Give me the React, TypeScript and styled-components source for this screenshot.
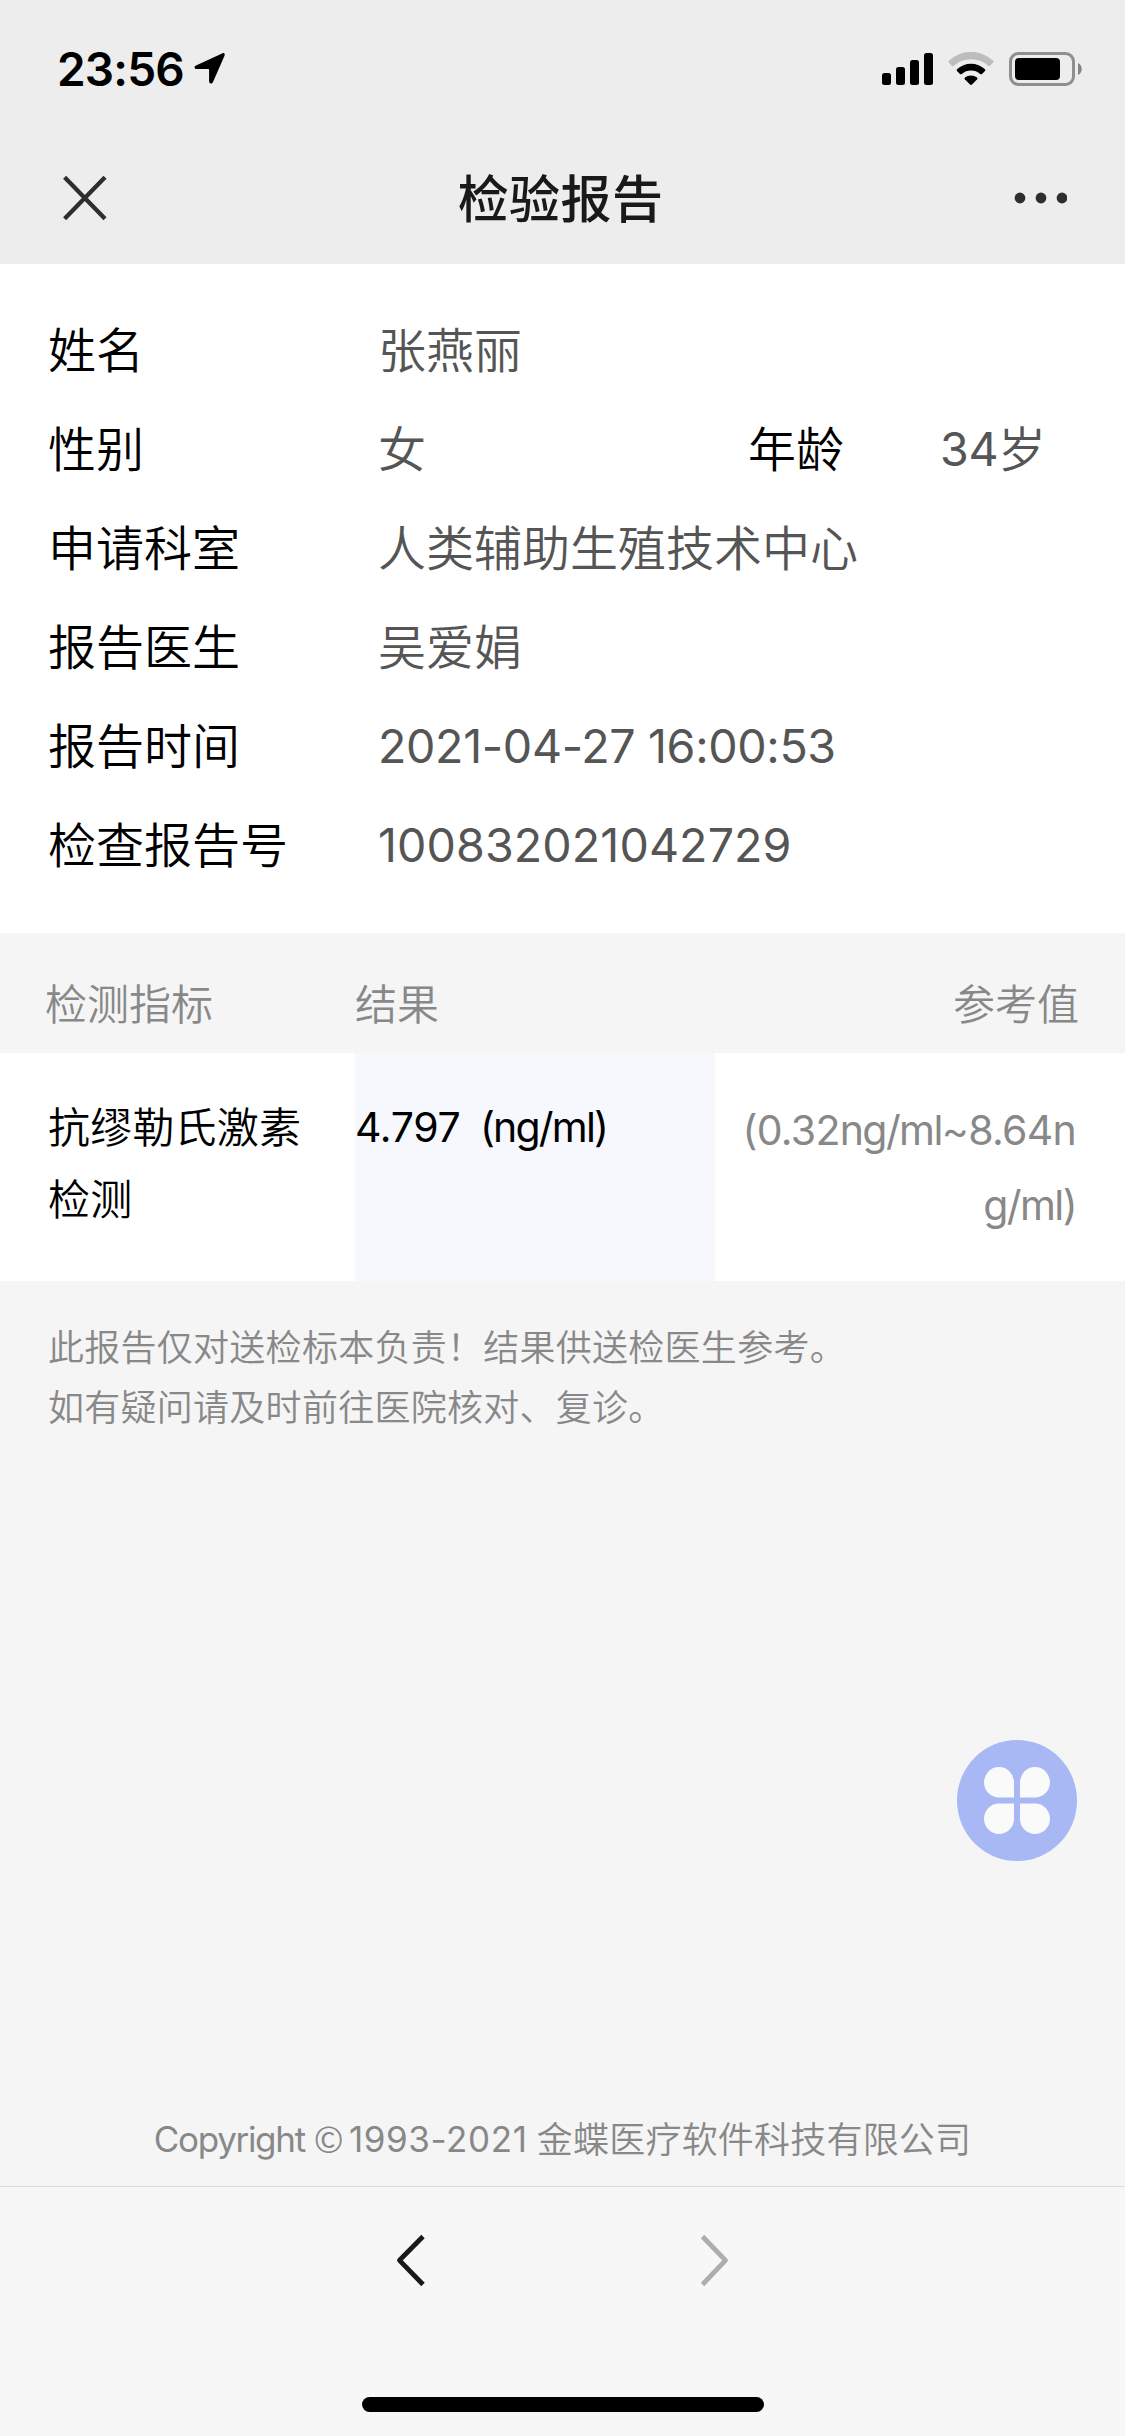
import React from "react";
import styled, { createGlobalStyle } from "styled-components";

const GlobalStyle = createGlobalStyle`
  * { box-sizing: border-box; }
  html, body { margin: 0; padding: 0; }
  body {
    background: #f5f5f5;
    font-family: Inter, "Noto Sans CJK SC", sans-serif;
    font-weight: 350;
    color: #000;
  }
`;

const Page = styled.div`
  position: relative;
  display: flex;
  flex-direction: column;
  width: 1125px;
  height: 2436px;
  overflow: hidden;
  background: #f5f5f5;
`;

const Header = styled.header`
  height: 264px;
  background: #ededed;
`;

const StatusBar = styled.div`
  display: flex;
  align-items: center;
  justify-content: space-between;
  height: 132px;
  padding: 6px 43px 0 57px;
`;

const StatusGroup = styled.div<{ $gap: number }>`
  display: flex;
  align-items: center;
  gap: ${(p) => p.$gap}px;
`;

const Clock = styled.span`
  font-size: 46px;
  font-weight: 600;
  line-height: 60px;
  letter-spacing: -0.8px;
`;

const NavBar = styled.div`
  display: grid;
  grid-template-columns: 200px 1fr 200px;
  align-items: center;
  height: 132px;
  padding: 0 58px 0 60px;
`;

const Title = styled.h1`
  margin: 0;
  padding: 3px 6px 0 0;
  text-align: center;
  font-size: 51px;
  font-weight: 500;
  line-height: 72px;
  letter-spacing: 0.4px;
  color: #191919;
`;

const NavRight = styled.div`
  display: flex;
  justify-content: flex-end;
`;

const InfoPanel = styled.section`
  height: 669px;
  padding: 37px 48px 0;
  background: #fff;
`;

const InfoRow = styled.div`
  display: flex;
  height: 99px;
  font-size: 48px;
  line-height: 99px;
  white-space: nowrap;
`;

const Label = styled.span<{ $width: number }>`
  width: ${(p) => p.$width}px;
`;

const Value = styled.span<{ $width?: number }>`
  width: ${(p) => (p.$width ? `${p.$width}px` : "auto")};
  color: #555;
`;

const Num = styled.span<{ $size: number; $track?: number; $lift?: number }>`
  font-size: ${(p) => p.$size}px;
  font-weight: 400;
  line-height: 1;
  letter-spacing: ${(p) => p.$track ?? 0}px;
  vertical-align: ${(p) => p.$lift ?? 0}px;
`;

const TableHead = styled.div`
  display: grid;
  grid-template-columns: 355px 360px 1fr;
  height: 120px;
  padding-top: 22px;
  font-size: 42px;
  line-height: 100px;
  color: #888;
`;

const HeadCell = styled.span<{ $align?: string; $pad?: string }>`
  padding: ${(p) => p.$pad ?? "0"};
  text-align: ${(p) => p.$align ?? "left"};
`;

const TableRow = styled.div`
  display: grid;
  grid-template-columns: 355px 360px 1fr;
  height: 228px;
  background: #fff;
`;

const NameCell = styled.div`
  padding: 39px 0 0 48px;
  font-size: 42px;
  line-height: 72px;
  letter-spacing: 0.2px;
  white-space: nowrap;
`;

const ResultCell = styled.div`
  padding-top: 38px;
  background: #f7f8fe;
  font-size: 41px;
  line-height: 72px;
  white-space: pre;
`;

const RangeCell = styled.div`
  padding: 40px 49px 0 0;
  font-size: 41px;
  line-height: 75px;
  text-align: right;
  white-space: nowrap;
  color: #888;
`;

const Notice = styled.p`
  margin: 0;
  padding: 37px 48px 0;
  font-size: 36px;
  line-height: 60px;
  letter-spacing: 0.27px;
  color: #888;
`;

const FloatingButton = styled.button`
  position: absolute;
  left: 957px;
  top: 1740px;
  width: 120px;
  height: 121px;
  padding: 0;
  border: 0;
  background: none;
`;

const Copyright = styled.footer`
  margin-top: auto;
  height: 76px;
  text-align: center;
  font-size: 36px;
  line-height: 60px;
  letter-spacing: 0.2px;
  white-space: nowrap;
  color: #888;
`;

const CopyMark = styled.span`
  margin: 0 5px 0 9px;
  font-family: "Noto Sans CJK SC", sans-serif;
  line-height: 1;
`;

const Toolbar = styled.nav`
  display: flex;
  flex-direction: column;
  align-items: center;
  justify-content: space-between;
  height: 250px;
  padding: 45px 0 24px;
  border-top: 1px solid #dadada;
  background: #f7f7f7;
`;

const ToolbarButtons = styled.div`
  display: flex;
  gap: 270px;
`;

const HomeIndicator = styled.div`
  width: 402px;
  height: 15px;
  border-radius: 8px;
  background: #000;
`;

const LocationIcon = () => (
  <svg width="32" height="34" viewBox="0 0 32 34">
    <path d="M28.6 1.3 2 13.6C-.2 14.7.3 17 2.5 17h11.8c.5 0 .8.3.8.8v11.4c0 2.6 2.8 3 3.9.7L30.300 4.300C31.300 1.900 30.200.600 28.600 1.300Z" />
  </svg>
);

const SignalIcon = () => (
  <svg width="51" height="34" viewBox="0 0 51 34">
    <rect x="0" y="21" width="9" height="12" rx="2.500" />
    <rect x="14" y="15" width="9" height="18" rx="2.500" />
    <rect x="28" y="8" width="9" height="25" rx="2.500" />
    <rect x="42" y="1" width="9" height="32" rx="2.500" />
  </svg>
);

const WifiIcon = () => (
  <svg width="46" height="34" viewBox="0 0 46 34">
    <path d="M0.900 8.800A31.800 31.800 0 0 1 45.100 8.800Q46 9.700 45.200 10.600L41.900 13.900Q41 14.600 40 13.800A25 25 0 0 0 6 13.800Q5 14.600 4.100 13.900L.800 10.600Q0 9.700.900 8.800Z" fill="#bdbdbd" />
    <path d="M9 17.300A20.500 20.500 0 0 1 37 17.300Q37.800 18.200 37 19L34 22Q33.200 22.700 32.200 22A14 14 0 0 0 13.800 22Q12.800 22.700 12 22L9 19Q8.200 18.200 9 17.300Z" />
    <path d="M16.900 25.600A9.700 9.700 0 0 1 29.100 25.600Q30 26.500 29.200 27.300L24 32.500Q23 33.400 22 32.500L16.800 27.300Q16 26.500 16.900 25.600Z" />
  </svg>
);

const BatteryIcon = () => (
  <svg width="73" height="34" viewBox="0 0 73 34">
    <rect x="1.500" y="1.500" width="63" height="31" rx="8" fill="none" stroke="#8f8f8f" strokeWidth="3" />
    <rect x="6" y="6" width="45" height="22" rx="4" />
    <path d="M69 11C74 13 74 21 69 23Z" fill="#858585" />
  </svg>
);

const CloseIcon = () => (
  <svg width="48" height="48" viewBox="0 0 48 48" fill="none" stroke="#2e2e2e" strokeWidth="4.300">
    <path d="M4.600 3.300 45 44.700M45 3.300 4.600 44.700" />
  </svg>
);

const MoreIcon = () => (
  <svg width="54" height="12" viewBox="0 0 54 12" fill="#2e2e2e">
    <circle cx="7" cy="6" r="5.400" />
    <circle cx="28" cy="6" r="5.400" />
    <circle cx="49" cy="6" r="5.400" />
  </svg>
);

const CloverIcon = () => (
  <svg width="120" height="121" viewBox="0 0 120 121">
    <ellipse cx="60" cy="60.500" rx="60" ry="60.500" fill="#a7b8f4" />
    <g fill="#fafafa">
      <path d="M57 57.500H42A15 15.250 0 1 1 57 42.250Z" />
      <path d="M63 57.500H78A15 15.250 0 1 0 63 42.250Z" />
      <path d="M57 63.500H42A15 15.250 0 1 0 57 78.750Z" />
      <path d="M63 63.500H78A15 15.250 0 1 1 63 78.750Z" />
    </g>
  </svg>
);

const Chevron = ({ color, flip }: { color: string; flip?: boolean }) => (
  <svg width="33" height="56" viewBox="0 0 33 56" fill="none" stroke={color} strokeWidth="4.800" strokeLinejoin="round">
    <path d={flip ? "M4.500 4.500 27.500 28.300 4.500 52.500" : "M28 4.500 4.500 28.300 28 52.500"} />
  </svg>
);

const infoRows: { label: string; value: string; track?: number }[] = [
  { label: "申请科室", value: "人类辅助生殖技术中心" },
  { label: "报告医生", value: "吴爱娟" },
  { label: "报告时间", value: "2021-04-27 16:00:53", track: -0.35 },
  { label: "检查报告号", value: "100832021042729", track: 0.1 },
];

export default function App() {
  return (
    <>
      <GlobalStyle />
      <Page lang="zh-CN">
        <Header>
          <StatusBar>
            <StatusGroup $gap={10}>
              <Clock>23:56</Clock>
              <LocationIcon />
            </StatusGroup>
            <StatusGroup $gap={15}>
              <SignalIcon />
              <WifiIcon />
              <BatteryIcon />
            </StatusGroup>
          </StatusBar>
          <NavBar>
            <CloseIcon />
            <Title>检验报告</Title>
            <NavRight>
              <MoreIcon />
            </NavRight>
          </NavBar>
        </Header>

        <InfoPanel>
          <InfoRow>
            <Label $width={330}>姓名</Label>
            <Value>张燕丽</Value>
          </InfoRow>
          <InfoRow>
            <Label $width={330}>性别</Label>
            <Value $width={370}>女</Value>
            <Label $width={192}>年龄</Label>
            <Value>
              <Num $size={46.6} $track={-0.4} $lift={1}>
                34
              </Num>
              岁
            </Value>
          </InfoRow>
          {infoRows.map((row) => (
            <InfoRow key={row.label}>
              <Label $width={330}>{row.label}</Label>
              <Value>
                {row.track !== undefined ? (
                  <Num $size={46.6} $track={row.track} $lift={1}>
                    {row.value}
                  </Num>
                ) : (
                  row.value
                )}
              </Value>
            </InfoRow>
          ))}
        </InfoPanel>

        <TableHead>
          <HeadCell $pad="0 0 0 45px">检测指标</HeadCell>
          <HeadCell>结果</HeadCell>
          <HeadCell $align="right" $pad="0 46px 0 0">
            参考值
          </HeadCell>
        </TableHead>
        <TableRow>
          <NameCell>
            抗缪勒氏激素
            <br />
            检测
          </NameCell>
          <ResultCell>
            <Num $size={41} $track={-0.3}>
              4.797
            </Num>
            <Num $size={41} $track={-1.8}>
              {"  (ng/ml)"}
            </Num>
          </ResultCell>
          <RangeCell>
            <Num $size={41} $track={-0.7}>
              (0.32
            </Num>
            <Num $size={41} $track={-1.6}>
              ng/ml
            </Num>
            <Num $size={41} $track={-0.7}>
              ~8.64n
            </Num>
            <br />
            <Num $size={41} $track={-1.6}>
              g/ml)
            </Num>
          </RangeCell>
        </TableRow>

        <Notice>
          此报告仅对送检标本负责！结果供送检医生参考。
          <br />
          如有疑问请及时前往医院核对、复诊。
        </Notice>

        <FloatingButton aria-label="menu">
          <CloverIcon />
        </FloatingButton>

        <Copyright>
          <Num $size={35} $track={-1.3} $lift={1}>
            Copyright
          </Num>
          <CopyMark>©</CopyMark>
          <Num $size={35} $track={0.6} $lift={1}>
            1993-2021
          </Num>
          <Num $size={35} $track={-0.5}>
            {" "}
          </Num>
          金蝶医疗软件科技有限公司
        </Copyright>

        <Toolbar>
          <ToolbarButtons>
            <Chevron color="#191919" />
            <Chevron color="#adadad" flip />
          </ToolbarButtons>
          <HomeIndicator />
        </Toolbar>
      </Page>
    </>
  );
}
